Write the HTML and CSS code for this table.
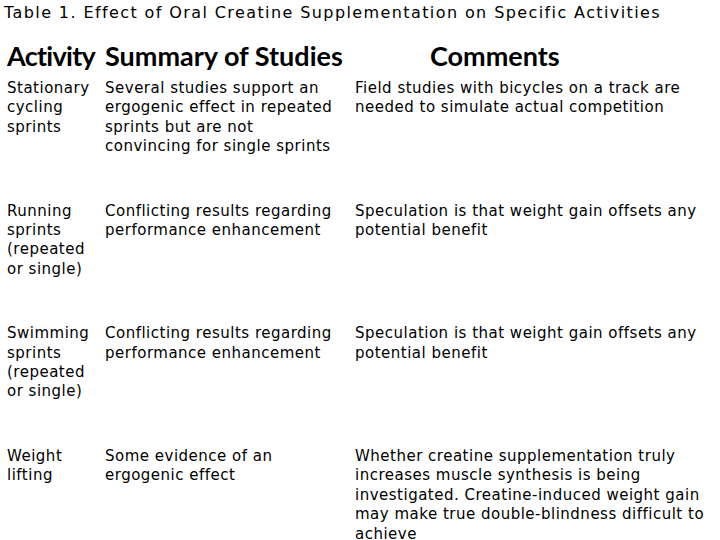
FILE: index.html
```html
<!DOCTYPE html>
<html>
<head>
<meta charset="utf-8">
<link rel="stylesheet" href="styles.css">
</head>
<body>
<div class="page">
  <p class="caption">Table 1. Effect of Oral Creatine Supplementation on Specific Activities</p>
  <div class="table">
    <div class="head h1">Activity</div>
    <div class="head h2">Summary of Studies</div>
    <div class="head h3">Comments</div>

    <div class="cell c1">Stationary cycling sprints</div>
    <div class="cell c2">Several studies support an ergogenic effect in repeated sprints but are not convincing for single sprints</div>
    <div class="cell c3">Field studies with bicycles on a track are needed to simulate actual competition</div>

    <div class="cell c1">Running sprints (repeated or single)</div>
    <div class="cell c2">Conflicting results regarding performance enhancement</div>
    <div class="cell c3">Speculation is that weight gain offsets any potential benefit</div>

    <div class="cell c1">Swimming sprints (repeated or single)</div>
    <div class="cell c2">Conflicting results regarding performance enhancement</div>
    <div class="cell c3">Speculation is that weight gain offsets any potential benefit</div>

    <div class="cell c1">Weight lifting</div>
    <div class="cell c2">Some evidence of an ergogenic effect</div>
    <div class="cell c3">Whether creatine supplementation truly increases muscle synthesis is being investigated. Creatine-induced weight gain may make true double-blindness difficult to achieve</div>
  </div>
</div>
</body>
</html>
```
FILE: styles.css
```css
html, body {
  margin: 0;
  padding: 0;
  background: #fff;
}
.page {
  width: 720px;
  height: 540px;
  overflow: hidden;
  color: #000;
  font-family: "DejaVu Sans", Verdana, sans-serif;
}
.caption {
  margin: 0;
  padding: 3px 0 0 4px;
  font-size: 16px;
  line-height: 20px;
  letter-spacing: 1.4px;
}
.table {
  display: grid;
  grid-template-columns: 98px 250px 1fr;
  padding-left: 7px;
}
.head {
  font-family: "Lato", sans-serif;
  font-weight: 700;
  font-size: 27px;
  line-height: 32px;
  padding-top: 17px;
  padding-bottom: 7px;
  white-space: nowrap;
}
.h1 { letter-spacing: -0.7px; }
.h3 { padding-left: 75px; }
.cell {
  font-size: 15px;
  line-height: 19.4px;
  letter-spacing: 0.5px;
  padding-bottom: 45px;
  padding-right: 2px;
}
.c2 { padding-right: 14px; }
```
